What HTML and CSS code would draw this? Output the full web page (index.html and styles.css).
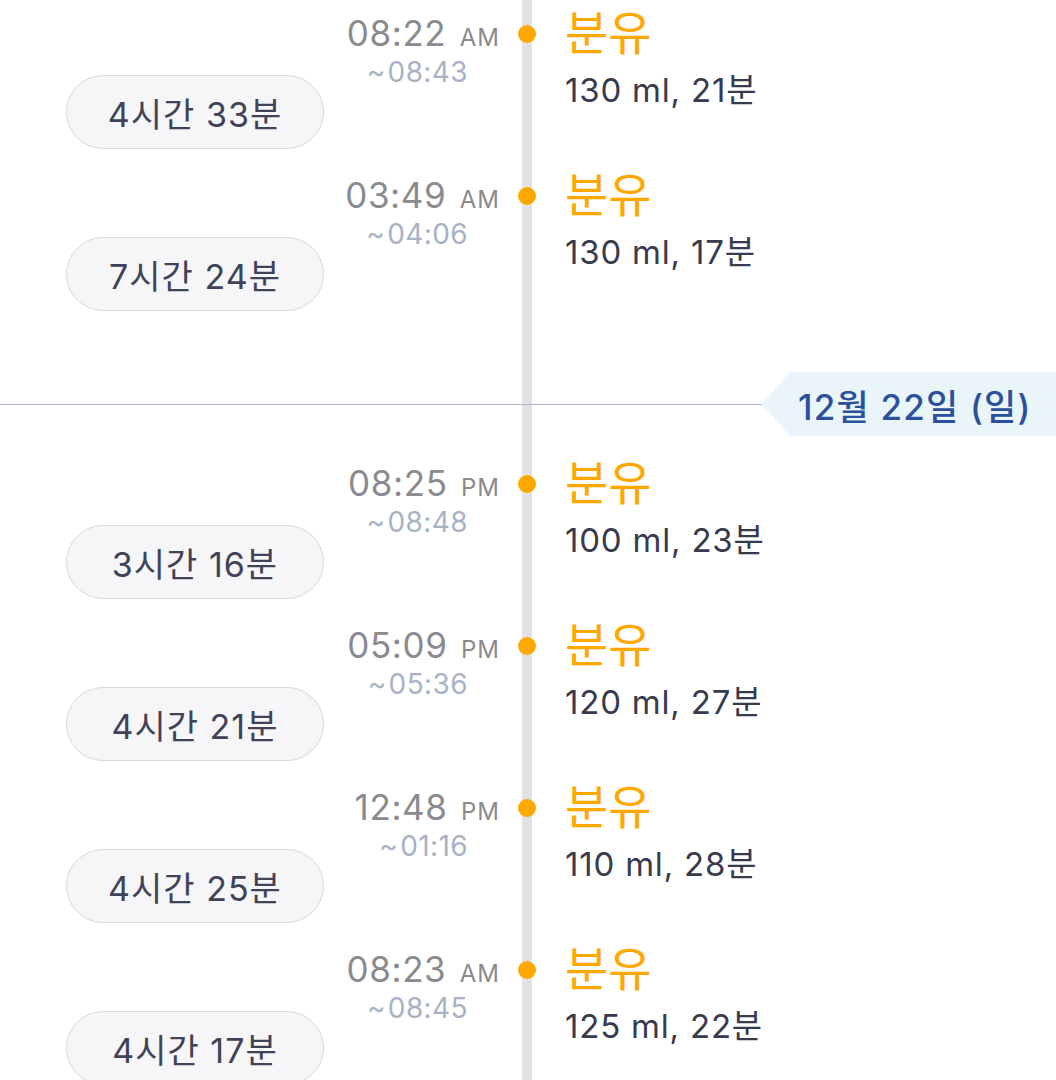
FILE: index.html
```html
<!DOCTYPE html>
<html lang="ko">
<head>
  <meta charset="UTF-8">
  <meta name="viewport" content="width=device-width, initial-scale=1.0">
  <title>수유 기록</title>
  <link rel="stylesheet" href="styles.css">
</head>
<body>
  <div class="timeline">
    <div class="entry">
      <div class="side">
        <div class="time">08:22 <span class="ampm">AM</span></div>
        <div class="until"><span class="tilde">~</span>08:43</div>
        <div class="pill">4시간 33분</div>
      </div>
      <div class="mark"><span class="dot"></span></div>
      <div class="info">
        <div class="kind">분유</div>
        <div class="amount">130 ml, 21분</div>
      </div>
    </div>
    <div class="entry">
      <div class="side">
        <div class="time">03:49 <span class="ampm">AM</span></div>
        <div class="until"><span class="tilde">~</span>04:06</div>
        <div class="pill">7시간 24분</div>
      </div>
      <div class="mark"><span class="dot"></span></div>
      <div class="info">
        <div class="kind">분유</div>
        <div class="amount">130 ml, 17분</div>
      </div>
    </div>

    <div class="day">
      <div class="day-line"></div>
      <div class="day-tag">12월 22일 (일)</div>
    </div>

    <div class="entry">
      <div class="side">
        <div class="time">08:25 <span class="ampm">PM</span></div>
        <div class="until"><span class="tilde">~</span>08:48</div>
        <div class="pill">3시간 16분</div>
      </div>
      <div class="mark"><span class="dot"></span></div>
      <div class="info">
        <div class="kind">분유</div>
        <div class="amount">100 ml, 23분</div>
      </div>
    </div>
    <div class="entry">
      <div class="side">
        <div class="time">05:09 <span class="ampm">PM</span></div>
        <div class="until"><span class="tilde">~</span>05:36</div>
        <div class="pill">4시간 21분</div>
      </div>
      <div class="mark"><span class="dot"></span></div>
      <div class="info">
        <div class="kind">분유</div>
        <div class="amount">120 ml, 27분</div>
      </div>
    </div>
    <div class="entry">
      <div class="side">
        <div class="time">12:48 <span class="ampm">PM</span></div>
        <div class="until"><span class="tilde">~</span>01:16</div>
        <div class="pill">4시간 25분</div>
      </div>
      <div class="mark"><span class="dot"></span></div>
      <div class="info">
        <div class="kind">분유</div>
        <div class="amount">110 ml, 28분</div>
      </div>
    </div>
    <div class="entry">
      <div class="side">
        <div class="time">08:23 <span class="ampm">AM</span></div>
        <div class="until"><span class="tilde">~</span>08:45</div>
        <div class="pill">4시간 17분</div>
      </div>
      <div class="mark"><span class="dot"></span></div>
      <div class="info">
        <div class="kind">분유</div>
        <div class="amount">125 ml, 22분</div>
      </div>
    </div>
  </div>
</body>
</html>
```

FILE: styles.css
```css
body { margin: 0; padding: 0; background: #fff; font-family: "Inter", "Noto Sans CJK KR", sans-serif; overflow: hidden; }
.timeline { min-height: 1080px; background: linear-gradient(to right, transparent 522px, #e2e2e4 522px, #e2e2e4 532px, transparent 532px); }

.entry { display: grid; grid-template-columns: 500px 54px 1fr; height: 162px; }
.side { display: grid; grid-template-columns: 66px 258px 1fr; grid-template-rows: 40px 22px 74px; padding-top: 13px; }
.time { grid-column: 3; grid-row: 1; justify-self: end; font-size: 35px; line-height: 40px; letter-spacing: 0.6px; color: #8a8a8f; white-space: nowrap; }
.ampm { font-size: 24px; margin-left: 3px; letter-spacing: 1px; }
.until { grid-column: 3; grid-row: 2 / 4; align-self: start; justify-self: end; margin-top: 4px; margin-right: 32px; font-size: 28px; line-height: 30px; letter-spacing: 0.4px; color: #a8b2c5; white-space: nowrap; }
.tilde { font-size: 28px; margin-right: 2px; }
.pill { grid-column: 2; grid-row: 3; display: flex; align-items: center; justify-content: center; border: 1px solid #dadadd; border-radius: 37px; background: #f6f6f8; font-size: 34px; letter-spacing: 1px; color: #404357; box-sizing: border-box; }

.mark { display: flex; justify-content: center; padding-top: 25px; }
.dot { width: 18px; height: 18px; border-radius: 50%; background: #ffa800; }

.info { padding-left: 11px; }
.kind { margin-top: 8px; font-size: 47px; line-height: 50px; color: #ffa800; }
.amount { margin-top: 12px; font-size: 33px; line-height: 40px; letter-spacing: 0.8px; color: #383b4d; white-space: nowrap; }

.day { display: flex; align-items: center; height: 126px; padding-top: 48px; padding-bottom: 14px; box-sizing: border-box; }
.day-line { flex: 1; height: 1px; background: #a9b7c7; }
.day-tag { height: 64px; width: 294px; box-sizing: border-box; padding-left: 36px; display: flex; align-items: center; background: #eaf5fa; clip-path: polygon(0 50%, 28px 0, 100% 0, 100% 100%, 28px 100%); font-size: 35px; font-weight: 500; letter-spacing: 1.2px; color: #2b519c; }
```
